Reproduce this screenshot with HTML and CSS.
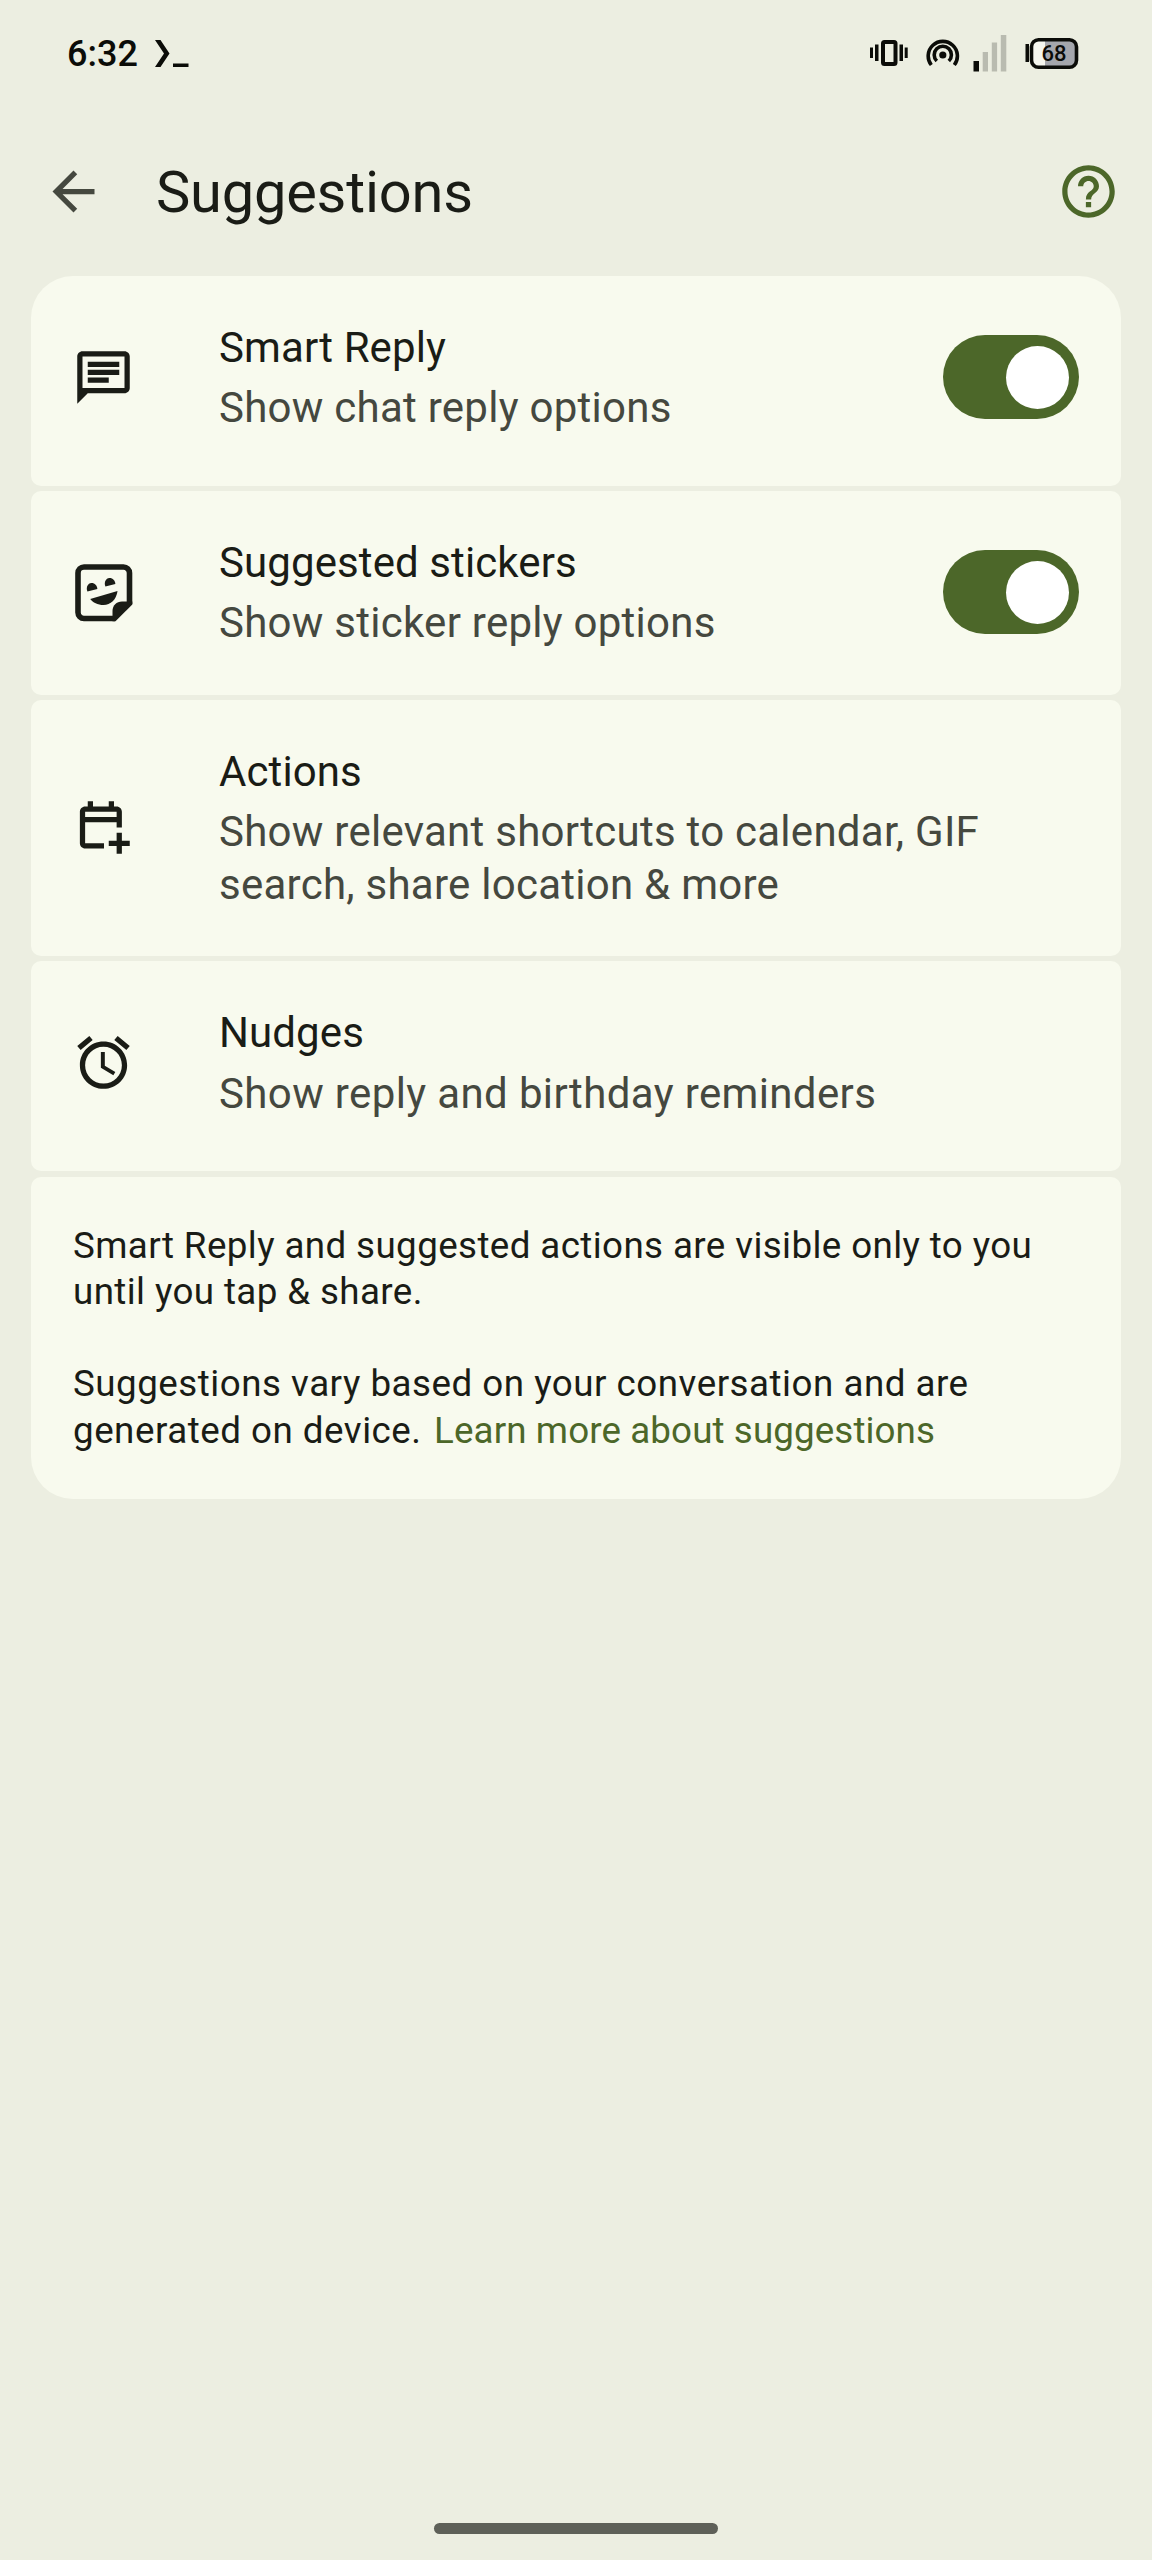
FILE: index.html
```html
<!DOCTYPE html>
<html lang="en">
<head>
    <meta charset="UTF-8">
    <meta name="viewport" content="width=device-width, initial-scale=1.0">
    <title>Suggestions</title>
    <link rel="stylesheet" href="styles.css">
</head>
<body>

    <header class="status-bar">
        <div class="status-left">
            <span class="clock">6:32</span>
            <svg class="prompt" width="34" height="28" viewBox="0 0 34 28">
                <path d="M0 0H5.5L14.5 13.5L5.5 27H0L9 13.5Z"/>
                <rect x="18" y="23.5" width="15.5" height="3.5"/>
            </svg>
        </div>

        <div class="status-right">
            <svg class="vibrate" width="38" height="40" viewBox="0 0 38 40">
                <rect x="13" y="9" width="12.5" height="22" rx="1.5" fill="none" stroke="#0b0c08" stroke-width="4"/>
                <rect x="0" y="14.5" width="3" height="10.5"/>
                <rect x="5" y="11.5" width="3.5" height="16.5"/>
                <rect x="29.5" y="11.5" width="3.5" height="16.5"/>
                <rect x="34.7" y="14.5" width="3" height="10.5"/>
            </svg>
            <svg class="hotspot" width="34" height="40" viewBox="0 0 34 40">
                <g fill="none" stroke="#0b0c08" stroke-width="3.6">
                    <path d="M5.3 32A14.6 14.6 0 1 1 28.3 32"/>
                    <path d="M10.8 28A8.6 8.6 0 1 1 22.8 28"/>
                </g>
                <circle cx="16.8" cy="22" r="3.6"/>
            </svg>
            <svg class="signal" width="34" height="40" viewBox="0 0 34 40">
                <rect x="0.5" y="28" width="5.5" height="10.5"/>
                <g fill="#b9bbb0">
                    <rect x="9.7" y="19" width="5.3" height="19.5"/>
                    <rect x="18.8" y="9.5" width="5.3" height="29"/>
                    <rect x="27.8" y="2" width="5.5" height="36.5"/>
                </g>
            </svg>
            <svg class="battery" width="54" height="40" viewBox="0 0 54 40">
                <rect x="0.5" y="11" width="3.5" height="18"/>
                <rect x="6.5" y="6.7" width="45" height="27.6" rx="7" fill="#a4a6ac"/>
                <path d="M20 6.7H13.5A7 7 0 0 0 6.5 13.7V27.3A7 7 0 0 0 13.5 34.3H20Z" fill="#f5f6ee"/>
                <rect x="6.5" y="6.7" width="45" height="27.6" rx="7" fill="none" stroke="#0b0c08" stroke-width="3.6"/>
                <text class="battery-level" x="29" y="28.4" text-anchor="middle">68</text>
            </svg>
        </div>
    </header>

    <nav class="app-bar">
        <svg class="back" width="63" height="63" viewBox="0 0 24 24">
            <path d="M20 11H7.83l5.59-5.59L12 4l-8 8 8 8 1.41-1.41L7.83 13H20v-2z"/>
        </svg>
        <h1>Suggestions</h1>
        <svg class="help" width="63" height="63" viewBox="0 0 24 24">
            <path d="M11 18h2v-2h-2v2zm1-16C6.48 2 2 6.48 2 12s4.48 10 10 10 10-4.48 10-10S17.52 2 12 2zm0 18c-4.41 0-8-3.59-8-8s3.59-8 8-8 8 3.59 8 8-3.59 8-8 8zm0-14c-2.21 0-4 1.79-4 4h2c0-1.1.9-2 2-2s2 .9 2 2c0 2-3 1.75-3 5h2c0-2.25 3-2.5 3-5 0-2.21-1.79-4-4-4z"/>
        </svg>
    </nav>

    <main class="settings">

        <div class="row tall">
            <svg class="icon" width="63" height="63" viewBox="0 0 24 24">
                <path d="M4 4h16v12H4V4m0-2c-1.1 0-2 .9-2 2v18l4-4h14c1.1 0 2-.9 2-2V4c0-1.1-.9-2-2-2H4zm2 10h8v2H6v-2zm0-3h12v2H6V9zm0-3h12v2H6V6z"/>
            </svg>
            <div class="label">
                <div class="title">Smart Reply</div>
                <div class="subtitle">Show chat reply options</div>
            </div>
            <div class="switch"><div class="knob"></div></div>
        </div>

        <div class="row short">
            <svg class="icon" width="63" height="63" viewBox="0 0 63 63">
                <path d="M43 57.5H12A6 6 0 0 1 6 51.5V12A6 6 0 0 1 12 6H51.5A6 6 0 0 1 57.5 12V43" fill="none" stroke="#1a1c16" stroke-width="5.6"/>
                <path d="M60.3 40.5V43.5L43.5 60.3H40.5V50C40.5 44.5 44.5 40.5 50 40.5Z"/>
                <path d="M15.4 30.6C13.6 26 16 22.3 19.3 22C22.6 21.8 25 24.2 25.4 28Z"/>
                <path d="M33.4 25.6C31.6 21 34 17.3 37.3 17C40.6 16.8 43 19.2 43.4 23Z"/>
                <path d="M18.2 38L45.5 30C44.5 38.5 38.5 44 31.5 44C25.5 44 21 41.5 18.2 38Z"/>
            </svg>
            <div class="label">
                <div class="title">Suggested stickers</div>
                <div class="subtitle">Show sticker reply options</div>
            </div>
            <div class="switch"><div class="knob"></div></div>
        </div>

        <div class="row double">
            <svg class="icon" width="63" height="63" viewBox="0 0 24 24">
                <path d="M19 12H17V10H5V18H12.2V20H5C3.9 20 3 19.1 3 18V6C3 4.9 3.9 4 5 4H6V2H8V4H14V2H16V4H17C18.1 4 19 4.9 19 6ZM17 8V6H5V8ZM17 22V19H14V17H17V14H19V17H22V19H19V22Z"/>
            </svg>
            <div class="label">
                <div class="title">Actions</div>
                <div class="subtitle">Show relevant shortcuts to calendar, GIF<br>search, share location &amp; more</div>
            </div>
        </div>

        <div class="row tall">
            <svg class="icon" width="63" height="63" viewBox="0 0 24 24">
                <path d="M22 5.72l-4.6-3.86-1.29 1.53 4.6 3.86L22 5.72zM7.88 3.39L6.6 1.86 2 5.71l1.29 1.53 4.59-3.85zM12.5 8H11v6l4.75 2.85.75-1.23-4-2.37V8zM12 4c-4.97 0-9 4.03-9 9s4.02 9 9 9c4.97 0 9-4.03 9-9s-4.03-9-9-9zm0 16c-3.87 0-7-3.13-7-7s3.13-7 7-7 7 3.13 7 7-3.13 7-7 7z"/>
            </svg>
            <div class="label">
                <div class="title">Nudges</div>
                <div class="subtitle wide">Show reply and birthday reminders</div>
            </div>
        </div>

        <div class="row info">
            <p class="visibility">Smart Reply and suggested actions are visible only to you<br>until you tap &amp; share.</p>
            <p>Suggestions vary based on your conversation and are<br>generated on device. <a href="#">Learn more about suggestions</a></p>
        </div>

    </main>

    <div class="home-bar"></div>

</body>
</html>
```
FILE: styles.css
```css
:root{
    --font-primary: Roboto, sans-serif;
    --background: #eceee1;
    --surface: #f8faee;
    --text: #1a1c16;
    --text-muted: #45483f;
    --accent: #4c6729;
}

*{
    box-sizing: border-box;
}

body{
    margin: 0;
    height: 2560px;
    display: flex;
    flex-direction: column;
    background-color: var(--background);
    color: var(--text);
    font-family: var(--font-primary);
    font-weight: 370;
}

svg{
    display: block;
    flex: none;
}

.status-bar{
    height: 107.5px;
    padding: 0 73px 0 67px;
    display: flex;
    justify-content: space-between;
    align-items: flex-start;
    color: #0b0c08;
    fill: #0b0c08;
}

.status-left{
    display: flex;
    padding-top: 33px;
}

.clock{
    width: 88px;
    font-size: 36px;
    font-weight: 500;
    line-height: 42px;
}

.prompt{
    margin-top: 7px;
}

.status-right{
    display: flex;
    padding-top: 33px;
}

.vibrate{
    margin-right: 18px;
}

.hotspot{
    margin-right: 13px;
}

.signal{
    margin-right: 18px;
}

.battery-level{
    font-size: 22px;
    font-weight: 500;
}

.app-bar{
    height: 168px;
    padding: 0 32px 0 42px;
    display: flex;
    align-items: center;
}

.app-bar h1{
    flex: 1;
    margin: 0 0 0 51px;
    font-size: 57.75px;
    font-weight: 370;
    line-height: 70px;
    letter-spacing: -0.2px;
}

.back{
    fill: var(--text-muted);
}

.help{
    fill: var(--accent);
}

.settings{
    margin: 0 31px;
    display: flex;
    flex-direction: column;
    gap: 5.25px;
}

.row{
    display: flex;
    align-items: center;
    padding: 0 42px 0 41px;
    border-radius: 10px;
    background-color: var(--surface);
}

.row:first-child{
    border-top-left-radius: 42px;
    border-top-right-radius: 42px;
}

.row:last-child{
    border-bottom-left-radius: 42px;
    border-bottom-right-radius: 42px;
}

.tall{
    height: 210px;
    padding-bottom: 7px;
}

.short{
    height: 204px;
    padding-bottom: 1px;
}

.double{
    height: 256px;
    padding-bottom: 1px;
}

.icon{
    fill: var(--text);
    margin-right: 84px;
}

.label{
    flex: 1;
    padding-top: 2px;
    white-space: nowrap;
    font-size: 42px;
    line-height: 52.5px;
    letter-spacing: 0.1px;
}

.subtitle{
    margin-top: 8px;
    color: var(--text-muted);
    letter-spacing: 0.26px;
}

.subtitle.wide{
    letter-spacing: 0.37px;
}

.switch{
    width: 136px;
    height: 84px;
    padding: 10.5px;
    display: flex;
    justify-content: flex-end;
    border-radius: 42px;
    background-color: var(--accent);
}

.knob{
    width: 63px;
    height: 63px;
    border-radius: 50%;
    background-color: white;
}

.info{
    height: 322px;
    flex-direction: column;
    align-items: flex-start;
    padding-top: 46px;
    padding-left: 42px;
    white-space: nowrap;
    font-size: 36.75px;
    line-height: 46.3px;
    letter-spacing: 0.5px;
}

.info p{
    margin: 0 0 46.3px;
}

.info .visibility{
    letter-spacing: 0.39px;
}

.info a{
    margin-left: 3px;
    color: var(--accent);
    font-weight: 400;
    letter-spacing: 0.1px;
    text-decoration: none;
}

.home-bar{
    width: 284px;
    height: 11px;
    margin: auto auto 26px;
    border-radius: 6px;
    background-color: #5e6058;
}
```
